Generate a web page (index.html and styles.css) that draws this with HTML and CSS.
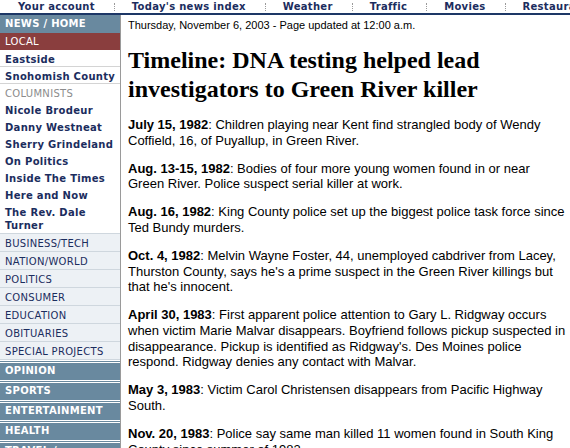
FILE: index.html
```html
<!DOCTYPE html>
<html>
<head>
<meta charset="utf-8">
<title>Timeline: DNA testing helped lead investigators to Green River killer</title>
<link rel="stylesheet" href="styles.css">
</head>
<body>
<div class="topnav">
  <a class="tn">Your account</a><span class="sep"></span>
  <a class="tn">Today's news index</a><span class="sep"></span>
  <a class="tn">Weather</a><span class="sep"></span>
  <a class="tn">Traffic</a><span class="sep"></span>
  <a class="tn">Movies</a><span class="sep"></span>
  <a class="tn">Restaurants</a><span class="sep"></span>
  <a class="tn">Classifieds</a>
</div>
<div class="layout">
  <nav class="side">
    <a class="head">NEWS / HOME</a>
    <a class="local">LOCAL</a>
    <a class="item ruled">Eastside</a>
    <a class="item ruled">Snohomish County</a>
    <div class="item label">COLUMNISTS</div>
    <a class="item">Nicole Brodeur</a>
    <a class="item">Danny Westneat</a>
    <a class="item">Sherry Grindeland</a>
    <a class="item">On Politics</a>
    <a class="item">Inside The Times</a>
    <a class="item">Here and Now</a>
    <a class="item">The Rev. Dale Turner</a>
    <div class="rows">
      <a class="row">BUSINESS/TECH</a>
      <a class="row">NATION/WORLD</a>
      <a class="row">POLITICS</a>
      <a class="row">CONSUMER</a>
      <a class="row">EDUCATION</a>
      <a class="row">OBITUARIES</a>
      <a class="row">SPECIAL PROJECTS</a>
    </div>
    <a class="band">OPINION</a>
    <a class="band">SPORTS</a>
    <a class="band">ENTERTAINMENT</a>
    <a class="band">HEALTH</a>
    <a class="band">TRAVEL / OUTDOORS</a>
    <a class="band">REAL ESTATE</a>
  </nav>
  <main class="main">
    <p class="dateline">Thursday, November 6, 2003 - Page updated at 12:00 a.m.</p>
    <h1 class="headline">Timeline: DNA testing helped lead investigators to Green River killer</h1>
    <p class="entry"><b>July 15, 1982</b>: Children playing near Kent find strangled body of Wendy Coffield, 16, of Puyallup, in Green River.</p>
    <p class="entry"><b>Aug. 13-15, 1982</b>: Bodies of four more young women found in or near Green River. Police suspect serial killer at work.</p>
    <p class="entry"><b>Aug. 16, 1982</b>: King County police set up the biggest police task force since Ted Bundy murders.</p>
    <p class="entry"><b>Oct. 4, 1982</b>: Melvin Wayne Foster, 44, unemployed cabdriver from Lacey, Thurston County, says he's a prime suspect in the Green River killings but that he's innocent.</p>
    <p class="entry"><b>April 30, 1983</b>: First apparent police attention to Gary L. Ridgway occurs when victim Marie Malvar disappears. Boyfriend follows pickup suspected in disappearance. Pickup is identified as Ridgway's. Des Moines police respond. Ridgway denies any contact with Malvar.</p>
    <p class="entry"><b>May 3, 1983</b>: Victim Carol Christensen disappears from Pacific Highway South.</p>
    <p class="entry"><b>Nov. 20, 1983</b>: Police say same man killed 11 women found in South King County since summer of 1982.</p>
  </main>
</div>
</body>
</html>
```
FILE: styles.css
```css
html, body {
  margin: 0;
  padding: 0;
  background: #fff;
  overflow: hidden;
}

.topnav {
  display: flex;
  align-items: center;
  height: 13px;
  border-bottom: 2px solid #1d3766;
  padding-left: 18px;
  white-space: nowrap;
  overflow: hidden;
  font: bold 10px "DejaVu Sans", Verdana, sans-serif;
  letter-spacing: 0.3px;
  color: #1b2d5e;
}

.tn {
  flex: none;
  line-height: 13px;
}

.sep {
  flex: none;
  width: 0;
  height: 8px;
  border-left: 1px dotted #9a9a9a;
  margin: 0 17px 0 19px;
}

.layout {
  display: grid;
  grid-template-columns: 121px 1fr;
  align-items: start;
}

.side {
  box-sizing: border-box;
  width: 121px;
  min-height: 440px;
  border-right: 1px solid #9a9a9a;
  font-family: "DejaVu Sans", Verdana, sans-serif;
  font-size: 10px;
  letter-spacing: 0.3px;
  color: #1b2d5e;
}

.side a, .side div {
  display: block;
}

.head {
  background: #69899f;
  color: #fff;
  font-weight: bold;
  height: 18px;
  line-height: 18px;
  padding-left: 5px;
}

.local {
  background: #8a3e3e;
  color: #fff;
  height: 17px;
  line-height: 17px;
  padding-left: 5px;
}

.item {
  padding: 3px 4px 1px 5px;
  line-height: 13px;
  font-weight: bold;
  color: #1b2d5e;
}

.item.ruled {
  padding-bottom: 0;
  border-bottom: 1px solid #d4d4d4;
}

.item.label {
  font-weight: normal;
  color: #8c8c8c;
}

.rows {
  border-bottom: 1px solid #cfd7de;
}

.row {
  background: #edf1f5;
  border-top: 1px solid #cfd7de;
  padding: 3px 4px 1px 5px;
  line-height: 13px;
  color: #1b2d5e;
}

.band {
  background: #69899f;
  color: #fff;
  font-weight: bold;
  border-top: 3px double #fff;
  padding: 1px 4px 3px 5px;
  line-height: 13px;
}

.main {
  padding: 0 3px 0 7px;
  font-family: "Liberation Sans", Arial, sans-serif;
  color: #000;
}

.dateline {
  margin: 4px 0 0;
  font-size: 11px;
  line-height: 13px;
}

.headline {
  margin: 14px 0 13px;
  font: bold 24px/29px "Liberation Serif", "Times New Roman", serif;
}

.entry {
  margin: 0 0 12.5px;
  font-size: 13px;
  line-height: 15.6px;
}
```
